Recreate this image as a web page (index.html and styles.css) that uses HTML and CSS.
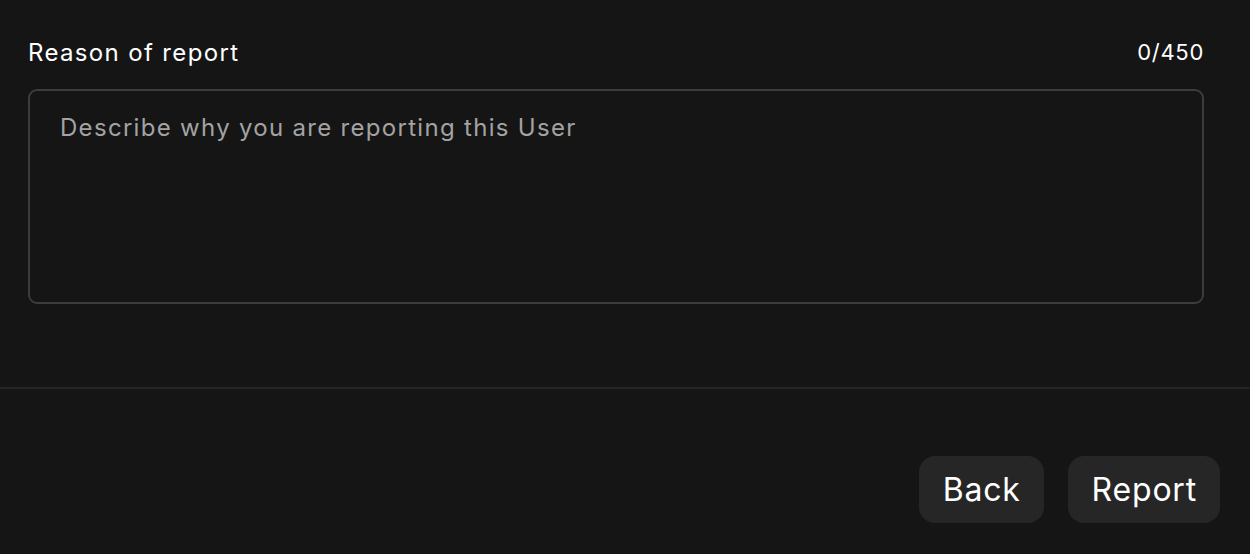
FILE: index.html
```html
<!DOCTYPE html>
<html>
<head>
<meta charset="utf-8">
<link rel="stylesheet" href="styles.css">
</head>
<body>
<div class="dialog">
  <div class="content">
    <div class="label-row">
      <span class="label">Reason of report</span>
      <span class="count">0/450</span>
    </div>
    <textarea class="reason" placeholder="Describe why you are reporting this User"></textarea>
  </div>
  <div class="footer">
    <button class="btn">Back</button>
    <button class="btn">Report</button>
  </div>
</div>
</body>
</html>
```
FILE: styles.css
```css
html, body {
  margin: 0;
  padding: 0;
  background: #151515;
  width: 1250px;
  height: 554px;
  overflow: hidden;
  font-family: Inter, "Liberation Sans", sans-serif;
  color: #ffffff;
}
.dialog {
  display: flex;
  flex-direction: column;
}
.content {
  padding: 36px 46px 0 28px;
  height: 389px;
  box-sizing: border-box;
  border-bottom: 2px solid #262626;
}
.label-row {
  display: flex;
  justify-content: space-between;
  align-items: center;
  height: 32px;
}
.label {
  font-size: 24px;
  letter-spacing: 1.35px;
}
.count {
  font-size: 22px;
  letter-spacing: 0.7px;
}
.reason {
  display: block;
  margin-top: 21px;
  width: 100%;
  height: 215px;
  box-sizing: border-box;
  background: #151515;
  border: 2px solid #3c3c3c;
  border-radius: 9px;
  padding: 22px 30px;
  font-family: inherit;
  font-size: 24px;
  letter-spacing: 1.3px;
  color: #fff;
  resize: none;
  outline: none;
}
.reason::placeholder {
  color: #a3a3a3;
}
.footer {
  display: flex;
  justify-content: flex-end;
  gap: 24px;
  padding: 67px 30px 0 0;
}
.btn {
  height: 67px;
  padding: 0 23px 0 24px;
  border: none;
  border-radius: 16px;
  background: #262626;
  color: #fff;
  font-family: inherit;
  font-size: 32px;
  letter-spacing: 0.8px;
}
```
